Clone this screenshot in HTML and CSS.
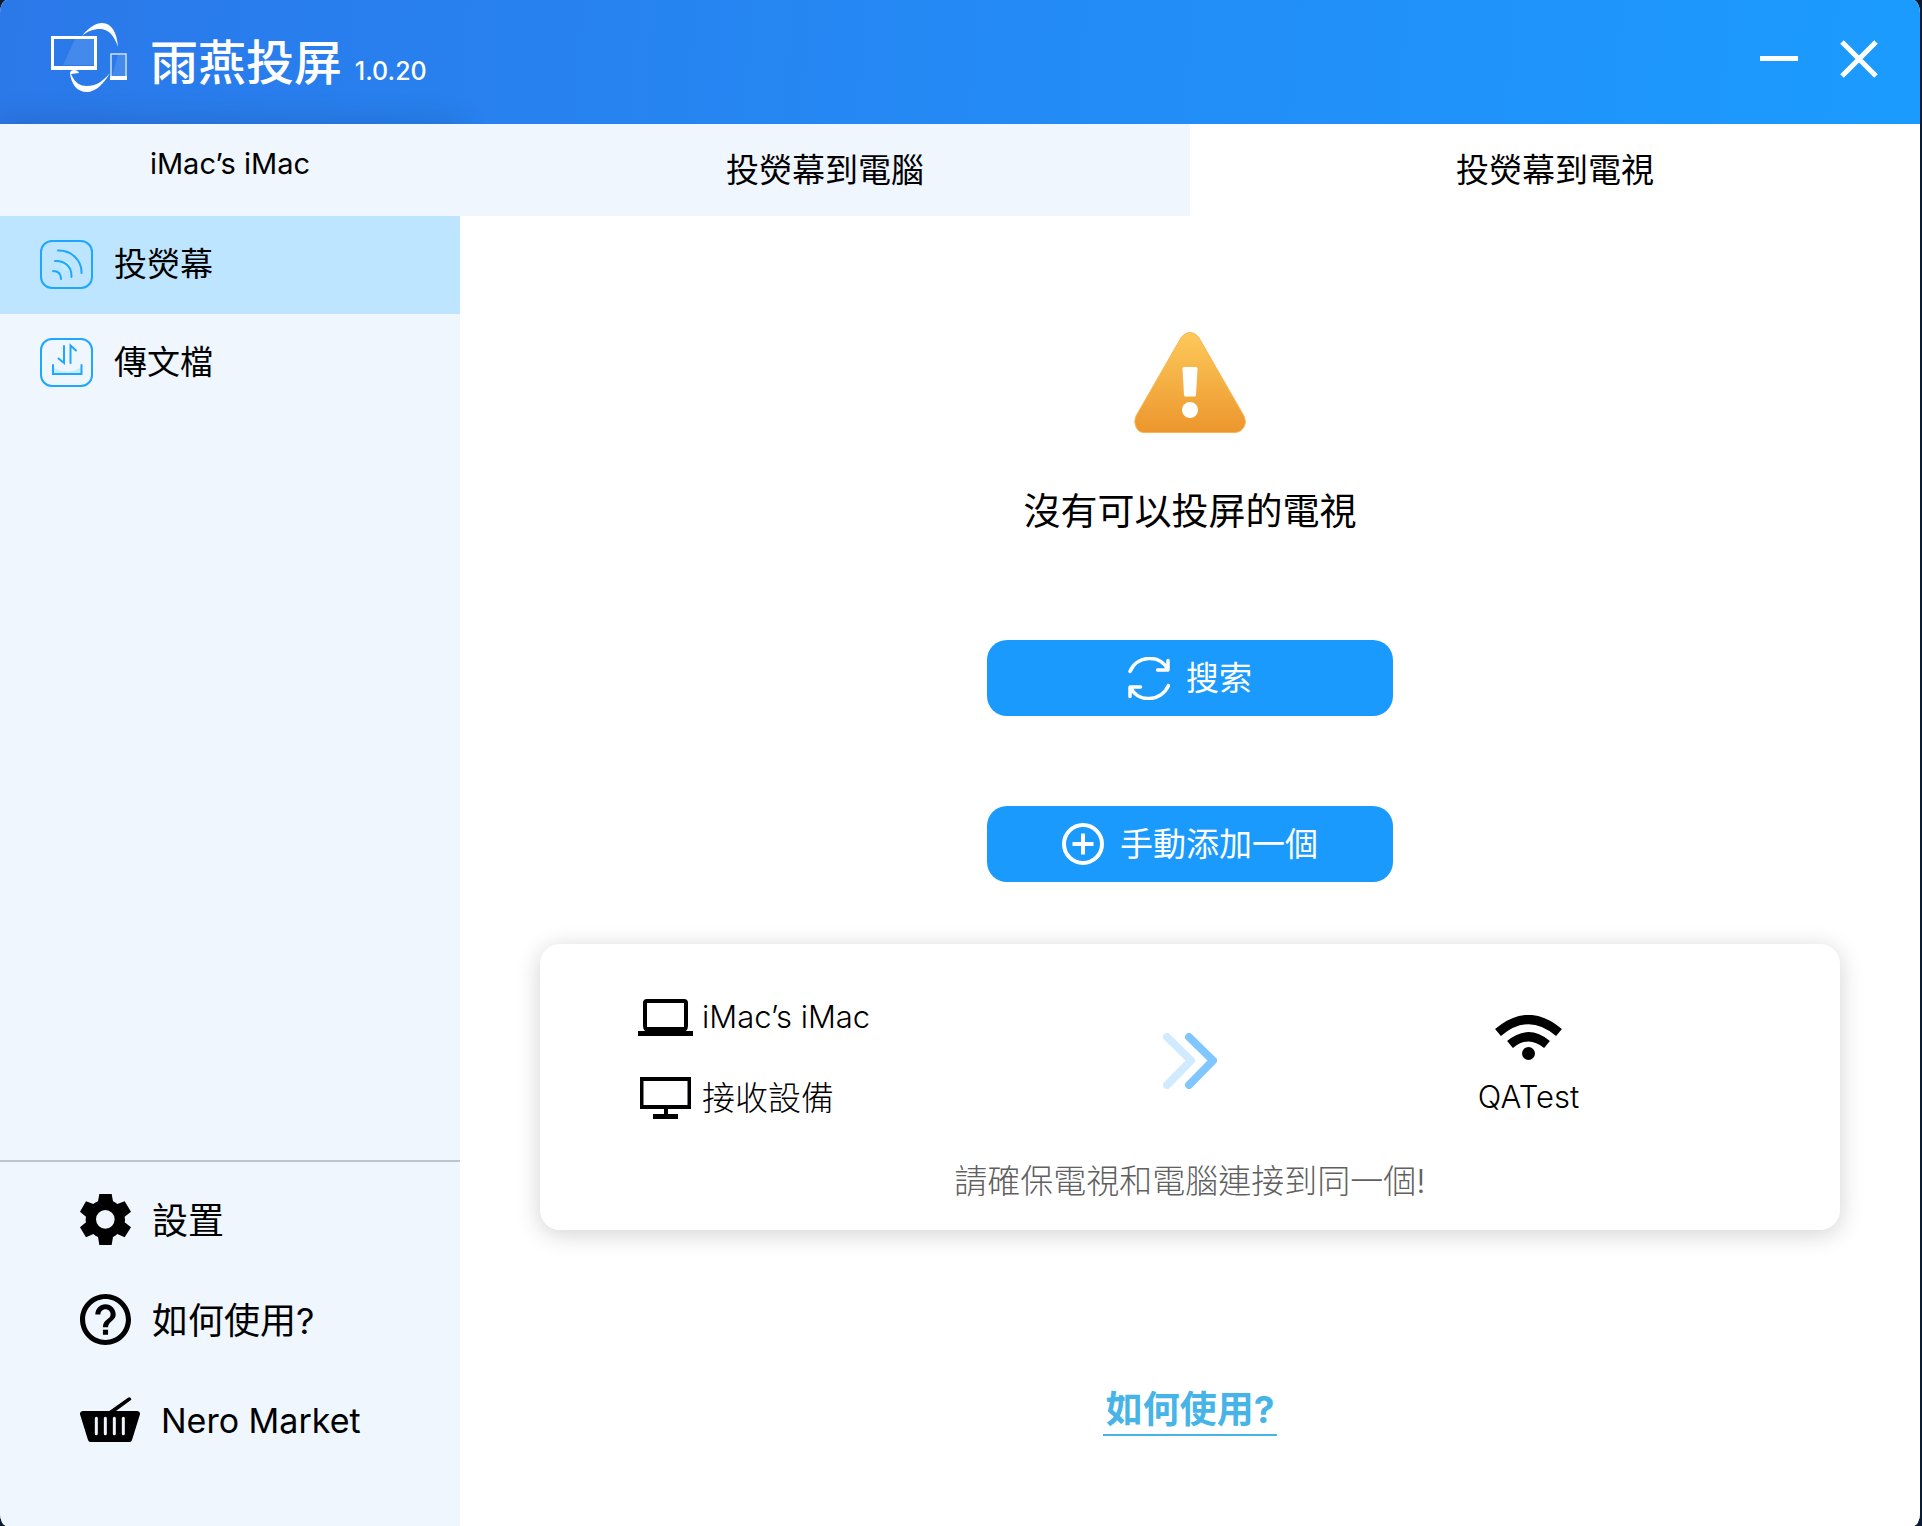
FILE: index.html
```html
<!DOCTYPE html>
<html lang="zh-Hant">
<head>
<meta charset="utf-8">
<meta name="viewport" content="width=device-width, initial-scale=1">
<title>雨燕投屏</title>
<link rel="stylesheet" href="styles.css">
</head>
<body>
<div class="window">
  <header class="titlebar">
    <svg class="logo" viewBox="0 0 76 70" width="76" height="70" aria-hidden="true">
      <path d="M31 13C38 4 45 0 51 0C61 0 66 10 67 24C63 12 57 6 49 6C42 6 37 8 31 13Z" fill="#fff"/>
      <rect x="1.500" y="14.500" width="43" height="31" fill="none" stroke="#fff" stroke-width="3"/>
      <path d="M24 16H43V42H12Z" fill="#fff" opacity=".12"/>
      <path d="M0 43H46V47H0Z" fill="#fff"/>
      <path d="M19 50C19 46 27 46 28 50L20 51C24 60 29 63 36 63C45 63 51 59 59 50C53 61 44 69 36 69C26 69 20 61 19 50Z" fill="#fff"/>
      <rect x="60" y="31" width="15" height="25" fill="none" stroke="#cfe2fb" stroke-width="1.500"/>
      <path d="M67 32H74V53H61Z" fill="#fff" opacity=".12"/>
      <path d="M59 53H76V57H59Z" fill="#fff"/>
    </svg>
    <h1 class="app-name">雨燕投屏 <span class="version">1.0.20</span></h1>
    <div class="window-controls">
      <button class="control" type="button" aria-label="最小化">
        <svg viewBox="0 0 38 38" width="38" height="38"><path d="M0 18.500H38" stroke="#fff" stroke-width="5"/></svg>
      </button>
      <button class="control" type="button" aria-label="關閉">
        <svg viewBox="0 0 38 38" width="38" height="38"><path d="M2 2L36 36M36 2L2 36" stroke="#fff" stroke-width="5"/></svg>
      </button>
    </div>
  </header>

  <div class="body">
    <aside class="sidebar">
      <h2 class="device-name">iMac’s iMac</h2>
      <nav class="modes">
        <a class="mode mode-active" href="#cast" aria-current="page">
          <svg viewBox="0 0 53 49" width="53" height="49" fill="none" stroke="#1ea7fd" stroke-width="2" stroke-linecap="round">
            <rect x="1" y="1" width="51" height="47" rx="11"/>
            <circle cx="26" cy="26" r="5" fill="#bdeefd" stroke="none"/>
            <path d="M18 10.500C31 10 42 20 41.500 33M15 21C25 20.500 32 27 31.500 37M13 31C18 31 21 34 21 39"/>
          </svg>
          投熒幕
        </a>
        <a class="mode" href="#files">
          <svg viewBox="0 0 53 49" width="53" height="49" fill="none" stroke="#1ea7fd" stroke-width="2" stroke-linecap="round">
            <rect x="1" y="1" width="51" height="47" rx="11"/>
            <path d="M13 29C20 35 34 35 41 29V36H13Z" fill="#c4ecfb" stroke="none"/>
            <path d="M13 27V36H41.500V27M24 8V25L18.500 20.500M30.500 25V7.500L36 12.500"/>
          </svg>
          傳文檔
        </a>
      </nav>
      <nav class="tools">
        <a class="tool" href="#settings">
          <svg viewBox="0 0 153 153" width="51" height="51">
            <path fill-rule="evenodd" d="M58 0H95L99 22Q106 25 112 30L134 22L153 53L134 68Q136 76 134 85L153 100L134 130L112 120Q106 126 99 129L95 153H58L54 129Q46 126 40 120L18 130L0 100L18 85Q16 76 18 68L0 53L18 22L40 30Q46 25 54 22ZM76 48A28 28 0 1 0 76 104A28 28 0 1 0 76 48Z"/>
          </svg>
          <span class="tool-label">設置</span>
        </a>
        <a class="tool" href="#help">
          <svg viewBox="2 2 20 20" width="51" height="51"><path d="M11 18h2v-2h-2v2zm1-16C6.480 2 2 6.480 2 12s4.480 10 10 10 10-4.480 10-10S17.520 2 12 2zm0 18c-4.410 0-8-3.590-8-8s3.590-8 8-8 8 3.590 8 8-3.590 8-8 8zm0-14c-2.210 0-4 1.790-4 4h2c0-1.100.9-2 2-2s2 .9 2 2c0 2-3 1.750-3 5h2c0-2.250 3-2.500 3-5 0-2.210-1.790-4-4-4z"/></svg>
          <span class="tool-label">如何使用?</span>
        </a>
        <a class="tool" href="#market">
          <svg viewBox="0 0 180 135" width="60" height="45">
            <path d="M8 42H88L144 2Q151 -1 154 6Q154 8 152 10L108 42H172Q181 43 180 52L156 129Q154 135 149 135H31Q26 135 24 129L0 52Q-1 43 8 42Z"/>
            <path d="M49 64V110M76 64V110M103 64V110M130 64V110" stroke="#eff6fe" stroke-width="9" stroke-linecap="round"/>
          </svg>
          <span class="tool-label tool-label-latin">Nero Market</span>
        </a>
      </nav>
    </aside>

    <main class="main">
      <div class="tabs" role="tablist">
        <button class="tab" type="button" role="tab" aria-selected="false">投熒幕到電腦</button>
        <button class="tab tab-active" type="button" role="tab" aria-selected="true">投熒幕到電視</button>
      </div>
      <section class="panel" role="tabpanel">
        <svg class="warning" viewBox="0 0 112 101" width="112" height="101" aria-hidden="true">
          <defs>
            <linearGradient id="amber" x1="0" y1="0" x2="0" y2="1">
              <stop offset="0" stop-color="#fdc95a"/>
              <stop offset="1" stop-color="#ec962d"/>
            </linearGradient>
          </defs>
          <path d="M47.500 5Q51 .5 56 .5T64.500 5L110 84Q113 90 110 95T102 100.500H10Q4.500 100.500 2 95T2 84Z" fill="url(#amber)" stroke="#fbb550"/>
          <path d="M48.500 36.500Q48.500 35 50 35H62Q63.500 35 63.500 36.500L62 63Q62 64.500 60.500 64.500H51.500Q50 64.500 50 63Z" fill="#fff"/>
          <circle cx="56" cy="78" r="8" fill="#fff"/>
        </svg>
        <p class="status">沒有可以投屏的電視</p>
        <div class="actions">
          <button class="action" type="button">
            <svg viewBox="0 0 42 43" width="42" height="43" fill="none" stroke="#fff" stroke-width="3.500" stroke-linecap="round" stroke-linejoin="round">
              <path d="M2 14.500C9 -2 32 -3 39.500 12M40 3.500V13H29.500" />
              <path d="M40.500 28.500C33 45 10 46 3 31M2 39.500V30H12.500" />
            </svg>
            搜索
          </button>
          <button class="action" type="button">
            <svg viewBox="0 0 42 42" width="42" height="42" fill="none" stroke="#fff" stroke-width="4">
              <circle cx="21" cy="21" r="19"/>
              <path d="M10.500 21H31.500M21 10.500V31.500"/>
            </svg>
            手動添加一個
          </button>
        </div>
        <div class="card">
          <div class="link-map">
            <ul class="devices">
              <li class="device">
                <svg viewBox="0 0 55 50" width="55" height="50"><path fill-rule="evenodd" d="M9 7H46Q50 7 50 11V34Q50 37 48 39H55V44H0V39H7Q5 37 5 34V11Q5 7 9 7ZM9 11V35H46V11Z"/></svg>
                <span class="latin">iMac’s iMac</span>
              </li>
              <li class="device">
                <svg viewBox="0 0 55 50" width="55" height="50"><path fill-rule="evenodd" d="M2 4H53V36H30V41H40V46H15V41H26V36H2ZM5.500 8V32H49.500V8Z"/></svg>
                接收設備
              </li>
            </ul>
            <svg class="arrows" viewBox="0 0 54 56" width="54" height="56" fill="none" stroke-width="8" stroke-linecap="round" stroke-linejoin="round" aria-hidden="true">
              <path d="M4 4L28 27.500L4 52" stroke="#d0eaff"/>
              <path d="M26 4L50 27.500L26 52" stroke="#80c6ff"/>
            </svg>
            <div class="network">
              <svg viewBox="0 0 67 45" width="67" height="45" fill="none" stroke="#000" stroke-width="9" aria-hidden="true">
                <path d="M3 17.500Q33.500 -8.500 64 17.500"/>
                <path d="M15 29.500Q33.500 14 52 29.500"/>
                <circle cx="33.500" cy="38.500" r="6.500" fill="#000" stroke="none"/>
              </svg>
              <span class="latin">QATest</span>
            </div>
          </div>
          <p class="hint">請確保電視和電腦連接到同一個!</p>
        </div>
        <a class="help-link" href="#help">如何使用?</a>
      </section>
    </main>
  </div>
</div>
</body>
</html>
```

FILE: styles.css
```css
* {
  box-sizing: border-box;
}

body {
  margin: 0;
  padding-right: 2px;
  background: #0c1a33;
  color: #000;
  font-family: Inter, "Noto Sans CJK TC", sans-serif;
  font-size: 33px;
  line-height: 50px;
}

h1, h2, p, ul {
  margin: 0;
  padding: 0;
}

ul {
  list-style: none;
}

button {
  border: 0;
  padding: 0;
  color: inherit;
  font: inherit;
  cursor: pointer;
}

a {
  color: inherit;
  text-decoration: none;
}

svg {
  display: block;
  flex: none;
}

.window {
  display: flex;
  flex-direction: column;
  min-height: 100vh;
  overflow: hidden;
  border-radius: 7px / 13px;
  background: #fff;
}

/* Title bar */

.titlebar {
  display: flex;
  align-items: center;
  height: 124px;
  padding: 0 42px 6px 51px;
  background: linear-gradient(95deg, #2b78e9, #2489f4 50%, #1b9bfe);
  color: #fff;
}

.logo {
  margin-bottom: 2px;
}

.app-name {
  padding-top: 16px;
  margin-left: 23px;
  font-size: 48px;
  font-weight: 500;
}

.version {
  font-size: 25px;
}

.window-controls {
  display: flex;
  gap: 42px;
  margin-left: auto;
}

.control {
  background: none;
}

.body {
  display: flex;
  flex: 1;
}

/* Sidebar */

.sidebar {
  display: flex;
  flex-direction: column;
  flex: none;
  width: 460px;
  background: #eff6fe;
  box-shadow: 0 0 30px rgba(0, 0, 0, .15);
}

.device-name {
  height: 92px;
  padding-top: 15px;
  font-size: 29px;
  font-weight: 400;
  text-align: center;
}

.mode {
  display: flex;
  align-items: center;
  gap: 21px;
  height: 98px;
  padding: 0 0 2px 40px;
}

.mode-active {
  background: #bde5ff;
}

.tools {
  margin-top: auto;
  padding: 7px 0 57px;
  border-top: 2px solid #bfc4cb;
}

.tool {
  display: flex;
  align-items: center;
  gap: 21px;
  height: 100px;
  padding-left: 80px;
}

.tool-label {
  padding-top: 4px;
  font-size: 36px;
}

.tool-label-latin {
  font-size: 34px;
}

/* Main area */

.main {
  display: flex;
  flex-direction: column;
  flex: 1;
  position: relative;
  background: #fff;
}

.tabs {
  display: flex;
}

.tab {
  flex: 1;
  height: 92px;
  background: #eff6fe;
}

.tab-active {
  background: #fff;
}

.panel {
  display: flex;
  flex-direction: column;
  align-items: center;
  padding: 116px 80px 80px;
}

.status {
  margin-top: 54px;
  font-size: 37px;
}

.actions {
  display: flex;
  flex-direction: column;
  gap: 90px;
  margin-top: 103px;
}

.action {
  display: flex;
  align-items: center;
  justify-content: center;
  gap: 16px;
  width: 406px;
  height: 76px;
  border-radius: 20px;
  background: #1b9afe;
  color: #fff;
}

.card {
  align-self: stretch;
  margin-top: 62px;
  padding: 48px 0 24px;
  border-radius: 20px;
  background: #fff;
  box-shadow: 0 4px 24px rgba(0, 0, 0, .18);
  font-weight: 300;
}

.link-map {
  display: grid;
  grid-template-columns: 1fr auto 1fr;
  align-items: center;
}

.devices {
  display: grid;
  gap: 31px;
  padding: 0 0 19px 98px;
}

.device {
  display: flex;
  align-items: center;
  gap: 9px;
}

.latin {
  font-size: 31px;
}

.arrows {
  margin-bottom: 12px;
}

.network {
  display: flex;
  flex-direction: column;
  align-items: center;
  align-self: end;
  gap: 12px;
  padding-bottom: 20px;
}

.hint {
  margin-top: 14px;
  color: #606060;
  text-align: center;
}

.help-link {
  margin-top: 156px;
  padding: 0 3px;
  border-bottom: 2px solid #46b4e7;
  color: #46b4e7;
  font-size: 37px;
  font-weight: 700;
  line-height: 48px;
}
```
